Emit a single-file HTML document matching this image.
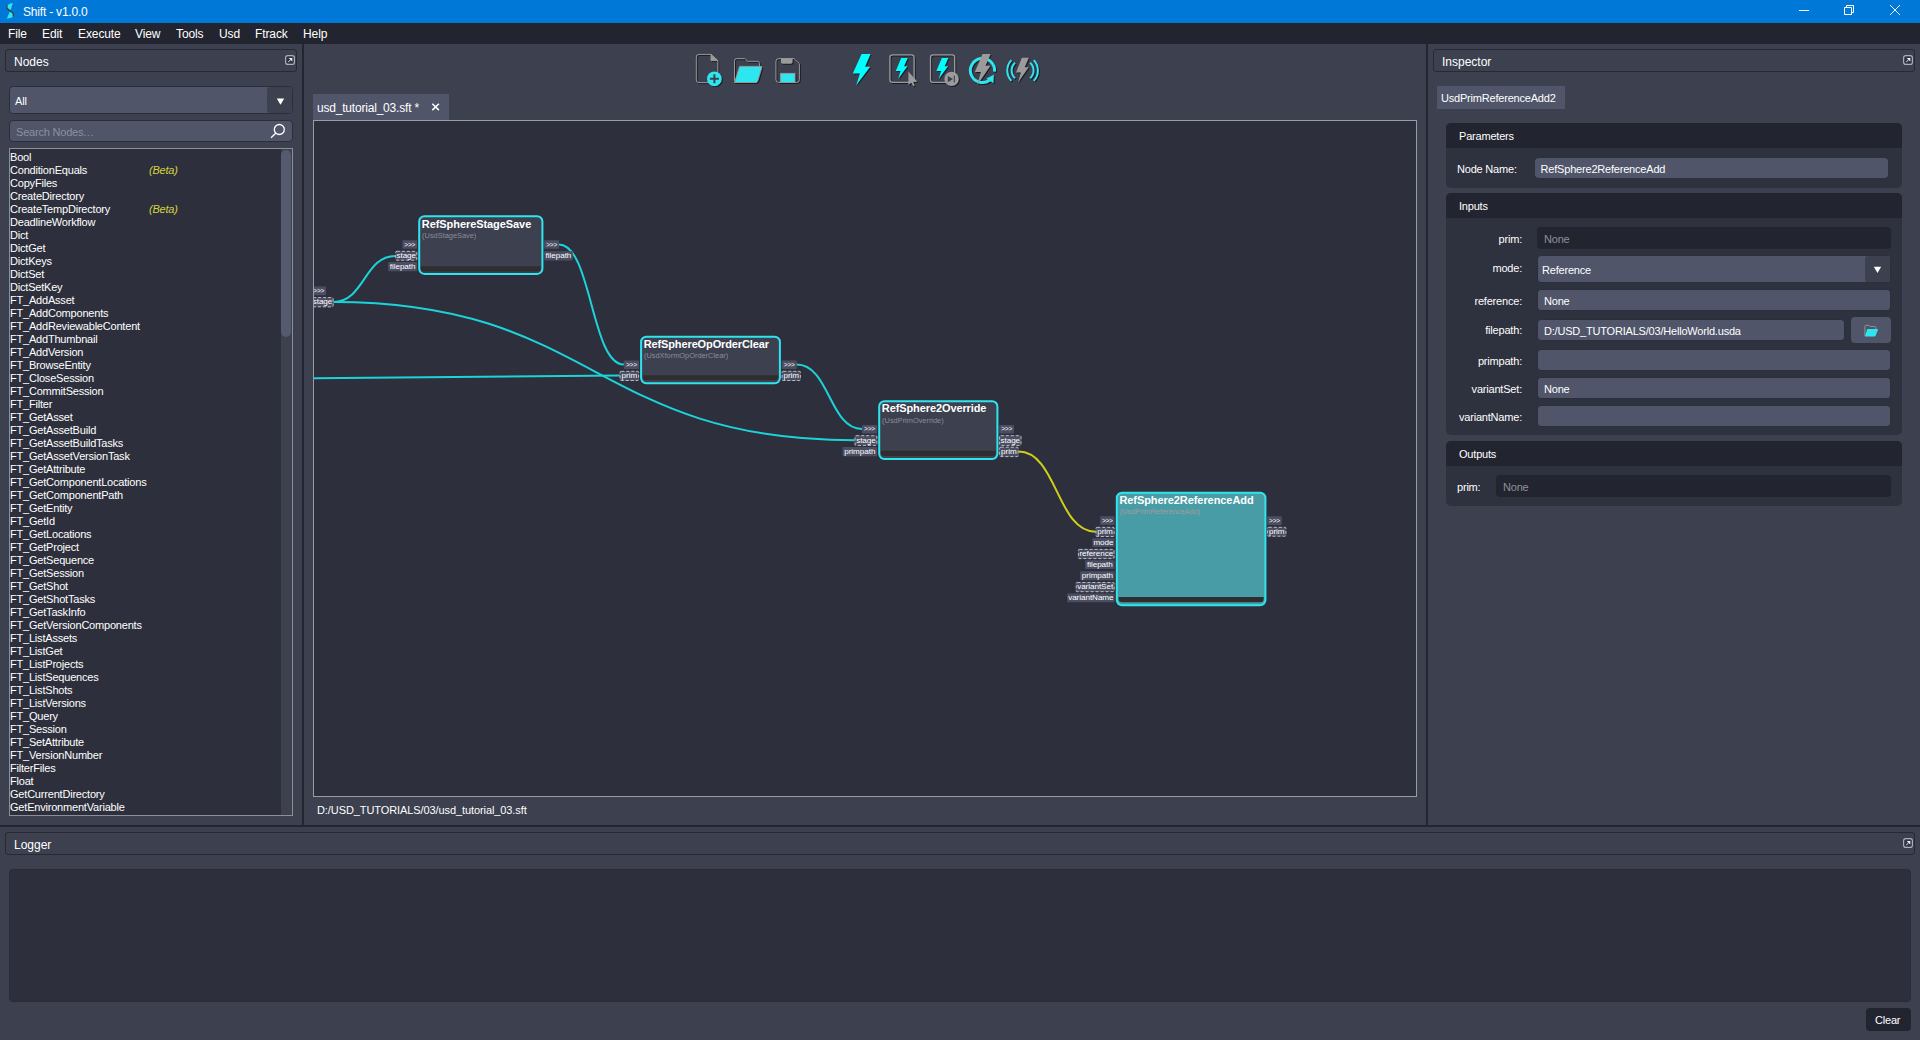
<!DOCTYPE html>
<html lang="en"><head><meta charset="utf-8"><title>Shift - v1.0.0</title>
<style>
*{box-sizing:border-box;margin:0;padding:0}
html,body{width:1920px;height:1040px;overflow:hidden;background:#3c404f;font-family:"Liberation Sans",sans-serif;color:#fff;font-size:11px}
body div,body span.a,body svg{position:absolute}
#titlebar{left:0;top:0;width:1920px;height:23px;background:#0078d7}
#title{left:23px;top:5px;font-size:12px;letter-spacing:-0.2px;line-height:14px;white-space:pre}
#menubar{left:0;top:23px;width:1920px;height:21px;background:#22242f}
.mi{top:4px;font-size:12px;line-height:14px;letter-spacing:-0.1px;white-space:pre}
.sepv{background:#232530;width:2px}
.seph{background:#232530;height:2px}
.dockhdr{border:1px solid #272934;border-radius:3px;height:23px;font-size:12px;line-height:14px}
.dockhdr span.a{left:8px;top:5px}
.flt{width:10px;height:10px;top:5px;right:1px}
.inp{background:#50556a;border:1px solid #2c2f3b;border-radius:4px}
.inpd{background:#22242f;border-radius:4px}
.t{white-space:pre;line-height:14px;letter-spacing:-0.2px;font-size:11px}
.t12{white-space:pre;line-height:14px;letter-spacing:-0.2px;font-size:12px}
.gray{color:#8d909b}
#list{left:9px;top:148px;width:284px;height:668px;background:#2d303c;border:1px solid #8c8f98;overflow:hidden}
.li{position:static !important;height:13px;line-height:13px;white-space:pre;letter-spacing:-0.2px;font-size:11px}
#listin{left:0px;top:2px;width:270px}
.beta{position:absolute;left:139px;color:#d4d43a;font-style:italic}
#sbt{left:271px;top:0;width:11px;height:666px;background:#3c404f}
#sb{left:271px;top:1px;width:10px;height:187px;background:#545a70;border-radius:5px}
#canvas{left:313px;top:120px;width:1104px;height:677px;background:#2d303c;border:1px solid #9a9ca5;overflow:hidden}
#tab{left:313px;top:94px;width:136px;height:26px;background:#50556a}
.sec{background:#2e313e;border-radius:5px;overflow:hidden}
.sech{left:0;top:0;right:0;height:25px;background:#22242f}
.sech span.a{left:13px;top:6px}
.lbl{text-align:right;white-space:pre;line-height:14px;letter-spacing:-0.2px;font-size:11px}
/* graph */
#graph text{font-family:"Liberation Sans",sans-serif;fill:#fff;white-space:pre}
#graph .nt{font-weight:bold;font-size:11px;letter-spacing:-0.07px}
#graph .ns{font-size:7.4px}
#graph .pt{font-size:8.1px;text-anchor:middle;letter-spacing:-0.05px}
#graph .pe{font-size:6.6px;text-anchor:middle;letter-spacing:-0.25px}

</style></head>
<body>
<div id="titlebar">
  <svg style="left:4px;top:1px" width="14" height="20" viewBox="4 1 14 20"><path d="M12.8 2.9C9 3.4 6.5 5.4 6.6 7.2C7.5 8.6 9.4 9.6 10.7 10.1Z" fill="#2ee6f0"/><path d="M9.8 11.8C11 12.2 13.4 13.4 13.8 15.2C13.2 17.4 9.5 18.4 6.8 18.6Z" fill="#2ee6f0"/><path d="M7.4 5.4C5.6 7.6 7.6 9.4 10.2 10.9C12.6 12.3 14.2 14 13.2 16.4" fill="none" stroke="#39414f" stroke-width="1.4"/></svg>
  <div id="title">Shift - v1.0.0</div>
  <svg style="left:1790px;top:0" width="130" height="23" viewBox="0 0 130 23" fill="none" stroke="#fff" stroke-width="1">
    <path d="M9 10.5h10"/>
    <path d="M54.5 7.5h7v7h-7z M56.5 7.5v-2h7v7h-2"/>
    <path d="M100 5l10 10 M110 5l-10 10"/>
  </svg>
</div>
<div id="menubar">
  <div class="mi" style="left:8px">File</div>
  <div class="mi" style="left:42px">Edit</div>
  <div class="mi" style="left:78px">Execute</div>
  <div class="mi" style="left:135px">View</div>
  <div class="mi" style="left:176px">Tools</div>
  <div class="mi" style="left:219px">Usd</div>
  <div class="mi" style="left:255px">Ftrack</div>
  <div class="mi" style="left:303px">Help</div>
</div>
<!-- separators -->
<div class="sepv" style="left:302px;top:44px;height:781px"></div>
<div class="sepv" style="left:1426px;top:44px;height:781px"></div>
<div class="seph" style="left:0;top:825px;width:1920px"></div>

<!-- Nodes dock -->
<div class="dockhdr" style="left:5px;top:49px;width:292px"><span class="a">Nodes</span>
  <svg class="flt" viewBox="0 0 10 10"><rect x="0.6" y="0.6" width="8.8" height="8.8" rx="2.2" fill="#313443" stroke="#a9adba" stroke-width="1.2"/><path d="M3.7 3.1H7.3V6.4Z" fill="#f2f2f4"/><path d="M5.6 4.9L3.3 6.9" stroke="#f2f2f4" stroke-width="1"/></svg>
</div>
<div class="inp" style="left:9px;top:86px;width:284px;height:28px">
  <div class="t" style="left:5px;top:7px">All</div>
  <div style="left:257px;top:0;width:25px;height:26px;background:#3c404f;border-radius:3px"></div>
  <svg style="left:265.5px;top:10.5px" width="9" height="8" viewBox="0 0 9 8"><path d="M0.8 0.6h7.4L4.5 6.8z" fill="#fff"/></svg>
</div>
<div class="inp" style="left:9px;top:120px;width:284px;height:22px">
  <div class="t gray" style="left:6px;top:4px">Search Nodes<span style="letter-spacing:0.5px">...</span></div>
  <svg style="left:258px;top:1px" width="18" height="18" viewBox="0 0 18 18" fill="none" stroke="#fff" stroke-width="1.3"><circle cx="11.3" cy="7.5" r="5"/><path d="M7.7 11.2L3 15.8"/></svg>
</div>
<div id="list"><div id="listin">
<div class="li">Bool</div>
<div class="li">ConditionEquals<span class="beta">(Beta)</span></div>
<div class="li">CopyFiles</div>
<div class="li">CreateDirectory</div>
<div class="li">CreateTempDirectory<span class="beta">(Beta)</span></div>
<div class="li">DeadlineWorkflow</div>
<div class="li">Dict</div>
<div class="li">DictGet</div>
<div class="li">DictKeys</div>
<div class="li">DictSet</div>
<div class="li">DictSetKey</div>
<div class="li">FT_AddAsset</div>
<div class="li">FT_AddComponents</div>
<div class="li">FT_AddReviewableContent</div>
<div class="li">FT_AddThumbnail</div>
<div class="li">FT_AddVersion</div>
<div class="li">FT_BrowseEntity</div>
<div class="li">FT_CloseSession</div>
<div class="li">FT_CommitSession</div>
<div class="li">FT_Filter</div>
<div class="li">FT_GetAsset</div>
<div class="li">FT_GetAssetBuild</div>
<div class="li">FT_GetAssetBuildTasks</div>
<div class="li">FT_GetAssetVersionTask</div>
<div class="li">FT_GetAttribute</div>
<div class="li">FT_GetComponentLocations</div>
<div class="li">FT_GetComponentPath</div>
<div class="li">FT_GetEntity</div>
<div class="li">FT_GetId</div>
<div class="li">FT_GetLocations</div>
<div class="li">FT_GetProject</div>
<div class="li">FT_GetSequence</div>
<div class="li">FT_GetSession</div>
<div class="li">FT_GetShot</div>
<div class="li">FT_GetShotTasks</div>
<div class="li">FT_GetTaskInfo</div>
<div class="li">FT_GetVersionComponents</div>
<div class="li">FT_ListAssets</div>
<div class="li">FT_ListGet</div>
<div class="li">FT_ListProjects</div>
<div class="li">FT_ListSequences</div>
<div class="li">FT_ListShots</div>
<div class="li">FT_ListVersions</div>
<div class="li">FT_Query</div>
<div class="li">FT_Session</div>
<div class="li">FT_SetAttribute</div>
<div class="li">FT_VersionNumber</div>
<div class="li">FilterFiles</div>
<div class="li">Float</div>
<div class="li">GetCurrentDirectory</div>
<div class="li">GetEnvironmentVariable</div>
</div><div id="sbt"></div><div id="sb"></div></div>

<!-- Toolbar -->
<svg id="toolbar" style="left:690px;top:48px;filter:drop-shadow(1.4px 1.2px 0.5px rgba(24,26,34,.95))" width="360" height="44" viewBox="690 48 360 44">
<g fill="none" stroke="#9b9b9b" stroke-width="0.95">
  <!-- new file -->
  <path d="M698.8 54.4H711L717.8 60.6V80Q717.8 82.6 715.2 82.6H698.8Q696.3 82.6 696.3 80V57Q696.3 54.4 698.8 54.4Z"/>
  <path d="M711 54.4V60.6H717.8Z" fill="#9b9b9b"/>
  <circle cx="714.4" cy="78.8" r="7.4" fill="#2ee6f0" stroke="none"/>
  <path d="M714.4 74.3V83.3M709.9 78.8H718.9" stroke="#3c404f" stroke-width="2"/>
  <!-- open folder -->
  <path d="M734.5 81V60.6Q734.5 58.6 736.5 58.6H744.6Q745.6 58.6 746.2 59.6L747.2 61.3H757.4Q759.5 61.3 759.5 63.4V66"/>
  <path d="M739.6 66.4H761Q762.2 66.4 761.8 67.6L757.6 81.4Q757.2 82.5 756 82.5H734.6Z" fill="#2ee6f0"/>
  <!-- save -->
  <path d="M778.8 58.6H794L799.4 63.6V79.6Q799.4 82.5 796.4 82.5H778.8Q775.9 82.5 775.9 79.6V61.5Q775.9 58.6 778.8 58.6Z"/>
  <path d="M781 58.6H792.6V62Q792.6 63.7 790.9 63.7H782.7Q781 63.7 781 62Z" fill="#9b9b9b" stroke="none"/>
  <path d="M780.6 73.4H795V82.4H780.6Z" fill="#2ee6f0"/>
  <!-- exec selected box -->
  <rect x="889.9" y="54.8" width="24.2" height="27.6" rx="2.6" stroke-width="1.3"/>
  <!-- exec from box -->
  <rect x="930.5" y="54.8" width="24.2" height="27.6" rx="2.6" stroke-width="1.3"/>
</g>
<!-- bolts -->
<path d="M861.6 54.1H870.6L865.1 66.75H870.3L856.25 85.2L859.9 73.5H852.8Z" fill="#00ffff"/>
<path id="sb1" d="M901.25 58H907.8L904.1 66.25H907.5L898.1 78.9L900.6 71H895.75Z" fill="#00ffff"/>
<path d="M941.85 58H948.4L944.7 66.25H948.1L938.7 78.9L941.2 71H936.35Z" fill="#00ffff"/>
<!-- cursor -->
<path d="M908.4 71.6V84.9L911.3 82.7L913.3 86.3L914.9 85.5L912.9 82L917.5 81.7Z" fill="#9b9b9b"/>
<!-- play circle -->
<circle cx="951.6" cy="78.9" r="7.2" fill="#9b9b9b"/>
<path d="M947.8 76V82.2L953 79.1Z" fill="#3c404f"/>
<path d="M954.3 75.8V82.4" stroke="#3c404f" stroke-width="1.1"/>
<!-- refresh -->
<path d="M994.53 71.71A12.1 12.1 0 1 0 989.6 80.24" fill="none" stroke="#2ee6f0" stroke-width="3"/>
<path d="M993.85 74.8L993.27 83.1L986.5 78.65Z" fill="#2ee6f0" stroke="#2ee6f0" stroke-width="0.3" stroke-linejoin="round"/>
<path d="M982.5 54.1H990.7L985.55 65.8H990.5L977.3 85L980.9 72.1H974.8Z" fill="#9b9b9b"/>
<!-- wireless -->
<g fill="none" stroke="#2ee6f0" stroke-width="2">
  <path d="M1015.1 62.8A10.3 10.3 0 0 0 1015.1 78.2"/>
  <path d="M1011.4 60.1A15.2 15.2 0 0 0 1011.4 80.9"/>
  <path d="M1030.1 62.8A10.3 10.3 0 0 1 1030.1 78.2"/>
  <path d="M1033.8 60.1A15.2 15.2 0 0 1 1033.8 80.9"/>
</g>
<path d="M1021.9 57.8H1028.9L1024.7 67.2H1028.7L1018.1 82.5L1020.9 72.4H1016Z" fill="#9b9b9b"/>
</svg>


<!-- Tab + canvas -->
<div id="tab"><div class="t12" style="left:4px;top:7px">usd_tutorial_03.sft *</div>
  <svg style="left:118px;top:9px" width="9" height="9" viewBox="0 0 9 9"><path d="M1.3 0.7l6.6 6.4M7.9 0.7l-6.6 6.4" stroke="#fff" stroke-width="1.5"/></svg>
</div>
<div id="canvas">
<svg id="graph" style="left:0;top:0" width="1102" height="675" viewBox="314 121 1102 675"><g fill="none" stroke-width="2" stroke-linecap="round"><path d="M333.5 301.9C364.4 301.9 364.4 255.9 395.3 255.9" stroke="#1dd3da"/><path d="M333.5 301.9C594.0 301.9 594.0 440.2 854.6 440.2" stroke="#1dd3da"/><path d="M300 378.3Q480 377 619.7 375.4" stroke="#1dd3da"/><path d="M559 244.4C591.4 244.4 591.4 364.5 623.8 364.5" stroke="#1dd3da"/><path d="M796.7 364.5C829.4 364.5 829.4 429 862 429" stroke="#1dd3da"/><path d="M1018.5 451.5C1057.0 451.5 1057.0 531.8 1095.6 531.8" stroke="#cfcf1a"/></g>
<rect x="311.5" y="286.6" width="14.5" height="8.7" rx="0.8" fill="#4b4e62"/><text x="318.75" y="293.0" class="pe">&gt;&gt;&gt;</text>
<rect x="311.5" y="297.2" width="22.0" height="10.0" rx="0.8" fill="#4b4e62"/><rect x="311.9" y="297.6" width="21.2" height="9.2" rx="1.2" fill="none" stroke="#cfd0d6" stroke-width="0.85" stroke-dasharray="3 2"/><text x="322.5" y="304.3" class="pt">stage</text>
<rect x="419.2" y="216.3" width="123.2" height="57.6" rx="5.2" fill="#3c404f" stroke="#30e4ee" stroke-width="2"/><path d="M420.95 266.30H540.65V268.00Q540.65 271.60 537.05 271.60H424.55Q420.95 271.60 420.95 268.00Z" fill="#2e2e30"/><text x="421.8" y="228.0" class="nt" style="letter-spacing:-0.07px">RefSphereStageSave</text><text x="422.1" y="237.7" class="ns" style="fill:#8b8e99">(UsdStageSave)</text>
<rect x="402.4" y="240.2" width="14.6" height="8.6" rx="0.8" fill="#4b4e62"/><text x="409.7" y="246.5" class="pe">&gt;&gt;&gt;</text>
<rect x="395.3" y="250.9" width="21.9" height="9.7" rx="0.8" fill="#4b4e62"/><rect x="395.7" y="251.3" width="21.1" height="8.9" rx="1.2" fill="none" stroke="#cfd0d6" stroke-width="0.85" stroke-dasharray="3 2"/><text x="406.25" y="257.7" class="pt">stage</text>
<rect x="388.2" y="261.9" width="28.8" height="9.3" rx="0.8" fill="#4b4e62"/><text x="402.6" y="268.7" class="pt">filepath</text>
<rect x="544.2" y="240.2" width="14.8" height="8.6" rx="0.8" fill="#4b4e62"/><text x="551.6" y="246.5" class="pe">&gt;&gt;&gt;</text>
<rect x="544.2" y="251.3" width="28.5" height="9.1" rx="0.8" fill="#4b4e62"/><text x="558.45" y="257.9" class="pt">filepath</text>
<rect x="641.1" y="336.7" width="138.8" height="46.6" rx="5.2" fill="#3c404f" stroke="#30e4ee" stroke-width="2"/><path d="M642.85 375.20H778.15V376.40Q778.15 380.00 774.55 380.00H646.45Q642.85 380.00 642.85 376.40Z" fill="#2e2e30"/><text x="643.7" y="348.0" class="nt" style="letter-spacing:-0.12px">RefSphereOpOrderClear</text><text x="644.0" y="358.1" class="ns" style="fill:#8b8e99">(UsdXformOpOrderClear)</text>
<rect x="623.8" y="360.5" width="15.2" height="8.6" rx="0.8" fill="#4b4e62"/><text x="631.4" y="366.8" class="pe">&gt;&gt;&gt;</text>
<rect x="619.7" y="370.9" width="19.3" height="10.0" rx="0.8" fill="#4b4e62"/><rect x="620.1" y="371.3" width="18.5" height="9.2" rx="1.2" fill="none" stroke="#cfd0d6" stroke-width="0.85" stroke-dasharray="3 2"/><text x="629.35" y="378.0" class="pt">prim</text>
<rect x="781.7" y="360.5" width="15.0" height="8.6" rx="0.8" fill="#4b4e62"/><text x="789.2" y="366.8" class="pe">&gt;&gt;&gt;</text>
<rect x="781.7" y="370.9" width="19.1" height="10.0" rx="0.8" fill="#4b4e62"/><rect x="782.1" y="371.3" width="18.3" height="9.2" rx="1.2" fill="none" stroke="#cfd0d6" stroke-width="0.85" stroke-dasharray="3 2"/><text x="791.25" y="378.0" class="pt">prim</text>
<rect x="879.2" y="401.2" width="118.2" height="57.8" rx="5.2" fill="#3c404f" stroke="#30e4ee" stroke-width="2"/><path d="M880.95 450.80H995.65V452.50Q995.65 456.10 992.05 456.10H884.55Q880.95 456.10 880.95 452.50Z" fill="#2e2e30"/><text x="881.8" y="412.0" class="nt" style="letter-spacing:-0.1px">RefSphere2Override</text><text x="882.1" y="422.6" class="ns" style="fill:#8b8e99">(UsdPrimOverride)</text>
<rect x="862" y="425" width="15" height="8.6" rx="0.8" fill="#4b4e62"/><text x="869.5" y="431.3" class="pe">&gt;&gt;&gt;</text>
<rect x="854.6" y="435.3" width="22.7" height="10.5" rx="0.8" fill="#4b4e62"/><rect x="855.0" y="435.7" width="21.9" height="9.7" rx="1.2" fill="none" stroke="#cfd0d6" stroke-width="0.85" stroke-dasharray="3 2"/><text x="865.95" y="442.9" class="pt">stage</text>
<rect x="842.6" y="447" width="34.4" height="9.2" rx="0.8" fill="#4b4e62"/><text x="859.8" y="453.7" class="pt">primpath</text>
<rect x="999.2" y="425" width="14.8" height="8.6" rx="0.8" fill="#4b4e62"/><text x="1006.6" y="431.3" class="pe">&gt;&gt;&gt;</text>
<rect x="999.2" y="435.3" width="22.2" height="10.5" rx="0.8" fill="#4b4e62"/><rect x="999.6" y="435.7" width="21.4" height="9.7" rx="1.2" fill="none" stroke="#cfd0d6" stroke-width="0.85" stroke-dasharray="3 2"/><text x="1010.3" y="442.9" class="pt">stage</text>
<rect x="999.2" y="446.8" width="19.3" height="10.2" rx="0.8" fill="#4b4e62"/><rect x="999.6" y="447.2" width="18.5" height="9.4" rx="1.2" fill="none" stroke="#cfd0d6" stroke-width="0.85" stroke-dasharray="3 2"/><text x="1008.85" y="454.1" class="pt">prim</text>
<rect x="1116.8" y="492.8" width="148.6" height="112.5" rx="5.2" fill="#479ca5" stroke="#30e4ee" stroke-width="2"/><path d="M1118.55 597.05H1263.65V598.75Q1263.65 602.35 1260.05 602.35H1122.15Q1118.55 602.35 1118.55 598.75Z" fill="#2e2e30"/><text x="1119.4" y="504.0" class="nt" style="letter-spacing:-0.07px">RefSphere2ReferenceAdd</text><text x="1119.7" y="514.2" class="ns" style="fill:#a89b9e">(UsdPrimReferenceAdd)</text>
<rect x="1100.1" y="516.2" width="14.4" height="8.8" rx="0.8" fill="#4b4e62"/><text x="1107.3" y="522.7" class="pe">&gt;&gt;&gt;</text>
<rect x="1095.6" y="526.93" width="18.9" height="10.0" rx="0.8" fill="#4b4e62"/><rect x="1096.0" y="527.33" width="18.1" height="9.2" rx="1.2" fill="none" stroke="#cfd0d6" stroke-width="0.85" stroke-dasharray="3 2"/><text x="1105.05" y="534.03" class="pt">prim</text>
<rect x="1092.3" y="538.26" width="22.2" height="8.8" rx="0.8" fill="#4b4e62"/><text x="1103.4" y="544.56" class="pt">mode</text>
<rect x="1078" y="548.99" width="36.5" height="10.0" rx="0.8" fill="#4b4e62"/><rect x="1078.4" y="549.39" width="35.7" height="9.2" rx="1.2" fill="none" stroke="#cfd0d6" stroke-width="0.85" stroke-dasharray="3 2"/><text x="1096.25" y="556.09" class="pt">reference</text>
<rect x="1085.2" y="560.32" width="29.3" height="8.8" rx="0.8" fill="#4b4e62"/><text x="1099.85" y="566.62" class="pt">filepath</text>
<rect x="1080.2" y="571.35" width="34.3" height="8.8" rx="0.8" fill="#4b4e62"/><text x="1097.35" y="577.65" class="pt">primpath</text>
<rect x="1075.8" y="582.08" width="38.7" height="10.0" rx="0.8" fill="#4b4e62"/><rect x="1076.2" y="582.48" width="37.9" height="9.2" rx="1.2" fill="none" stroke="#cfd0d6" stroke-width="0.85" stroke-dasharray="3 2"/><text x="1095.15" y="589.18" class="pt">variantSet</text>
<rect x="1067.2" y="593.41" width="47.3" height="8.8" rx="0.8" fill="#4b4e62"/><text x="1090.85" y="599.71" class="pt">variantName</text>
<rect x="1267.2" y="516.2" width="14.6" height="8.7" rx="0.8" fill="#4b4e62"/><text x="1274.5" y="522.6" class="pe">&gt;&gt;&gt;</text>
<rect x="1267.2" y="526.9" width="19.1" height="9.7" rx="0.8" fill="#4b4e62"/><rect x="1267.6" y="527.3" width="18.3" height="8.9" rx="1.2" fill="none" stroke="#cfd0d6" stroke-width="0.85" stroke-dasharray="3 2"/><text x="1276.75" y="533.7" class="pt">prim</text></svg>
</div>
<div class="t" style="left:317px;top:803px;letter-spacing:-0.09px">D:/USD_TUTORIALS/03/usd_tutorial_03.sft</div>

<!-- Inspector -->
<div class="dockhdr" style="left:1433px;top:49px;width:482px"><span class="a">Inspector</span>
  <svg class="flt" viewBox="0 0 10 10"><rect x="0.6" y="0.6" width="8.8" height="8.8" rx="2.2" fill="#313443" stroke="#a9adba" stroke-width="1.2"/><path d="M3.7 3.1H7.3V6.4Z" fill="#f2f2f4"/><path d="M5.6 4.9L3.3 6.9" stroke="#f2f2f4" stroke-width="1"/></svg>
</div>
<div style="left:1437px;top:86px;width:128px;height:23px;background:#50556a"><div class="t" style="left:4px;top:5px">UsdPrimReferenceAdd2</div></div>

<div class="sec" style="left:1446px;top:123px;width:456px;height:65px">
  <div class="sech"><span class="a t">Parameters</span></div>
  <div class="t" style="left:11px;top:39px">Node Name:</div>
  <div class="inp" style="left:88.6px;top:34.8px;width:353px;height:20.4px;border:0"><div class="t" style="left:6px;top:4px">RefSphere2ReferenceAdd</div></div>
</div>

<div class="sec" style="left:1446px;top:193px;width:456px;height:242px">
  <div class="sech"><span class="a t">Inputs</span></div>
  <div class="lbl" style="left:0;width:76px;top:39px">prim:</div>
  <div class="inpd" style="left:91px;top:34px;width:354px;height:22px"><div class="t gray" style="left:7px;top:5px">None</div></div>
  <div class="lbl" style="left:0;width:76px;top:68px">mode:</div>
  <div class="inp" style="left:91px;top:62px;width:354px;height:28px"><div class="t" style="left:4px;top:7px">Reference</div>
    <div style="left:327px;top:0;width:25px;height:26px;background:#3c404f;border-radius:3px"></div>
    <svg style="left:334.6px;top:9.5px" width="9" height="8" viewBox="0 0 9 8"><path d="M0.8 0.8h7.4L4.5 7z" fill="#fff"/></svg>
  </div>
  <div class="lbl" style="left:0;width:76px;top:101px">reference:</div>
  <div class="inp" style="left:91px;top:96px;width:354px;height:22px"><div class="t" style="left:6px;top:4px">None</div></div>
  <div class="lbl" style="left:0;width:76px;top:130px">filepath:</div>
  <div class="inp" style="left:91px;top:126px;width:308px;height:22px"><div class="t" style="left:6px;top:4px">D:/USD_TUTORIALS/03/HelloWorld.usda</div></div>
  <div class="inp" style="left:405px;top:124px;width:40px;height:26px;border:0"><svg style="left:12.4px;top:6.5px" width="15" height="13" viewBox="1863 323 15 13"><path d="M1864.9 334.6V325.3Q1864.9 324.3 1865.9 324.3H1869.2L1870.2 325.5H1874.6Q1875.8 325.5 1875.8 326.7V328" fill="none" stroke="#9b9b9b" stroke-width="0.9"/><path d="M1867.3 327.9H1877.4Q1878.2 327.9 1877.9 328.7L1875.6 334.7Q1875.3 335.4 1874.5 335.4H1864.8Z" fill="#2ee6f0"/></svg></div>
  <div class="lbl" style="left:0;width:76px;top:161px">primpath:</div>
  <div class="inp" style="left:91px;top:156px;width:354px;height:22px"></div>
  <div class="lbl" style="left:0;width:76px;top:189px">variantSet:</div>
  <div class="inp" style="left:91px;top:184px;width:354px;height:22px"><div class="t" style="left:6px;top:4px">None</div></div>
  <div class="lbl" style="left:0;width:76px;top:217px">variantName:</div>
  <div class="inp" style="left:91px;top:212px;width:354px;height:22px"></div>
</div>

<div class="sec" style="left:1446px;top:441px;width:456px;height:65px">
  <div class="sech"><span class="a t">Outputs</span></div>
  <div class="t" style="left:11px;top:39px">prim:</div>
  <div class="inpd" style="left:50px;top:34px;width:395px;height:22px"><div class="t gray" style="left:7px;top:5px">None</div></div>
</div>

<!-- Logger -->
<div class="dockhdr" style="left:5px;top:832px;width:1910px"><span class="a">Logger</span>
  <svg class="flt" viewBox="0 0 10 10"><rect x="0.6" y="0.6" width="8.8" height="8.8" rx="2.2" fill="#313443" stroke="#a9adba" stroke-width="1.2"/><path d="M3.7 3.1H7.3V6.4Z" fill="#f2f2f4"/><path d="M5.6 4.9L3.3 6.9" stroke="#f2f2f4" stroke-width="1"/></svg>
</div>
<div style="left:9px;top:869px;width:1902px;height:133px;background:#2d303c;border:1px solid #2a2c37;border-radius:4px"></div>
<div style="left:1866px;top:1008px;width:45px;height:23px;background:#22242f;border-radius:4px"><div class="t" style="left:9px;top:5px">Clear</div></div>

</body></html>
